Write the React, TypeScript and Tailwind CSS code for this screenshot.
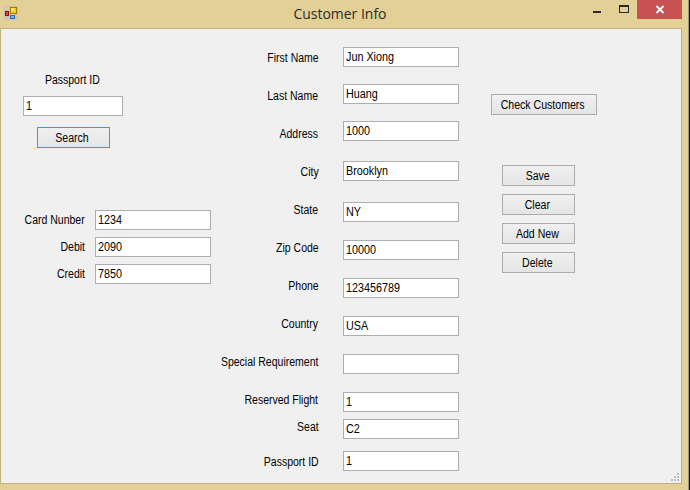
import type { ReactNode } from 'react';

type Entry = { text: string; gap: string };

const labels: Entry[] = [
  { text: 'First Name', gap: 'mt-[22px]' },
  { text: 'Last Name', gap: 'mt-6' },
  { text: 'Address', gap: 'mt-6' },
  { text: 'City', gap: 'mt-6' },
  { text: 'State', gap: 'mt-6' },
  { text: 'Zip Code', gap: 'mt-6' },
  { text: 'Phone', gap: 'mt-6' },
  { text: 'Country', gap: 'mt-6' },
  { text: 'Special Requirement', gap: 'mt-6' },
  { text: 'Reserved Flight', gap: 'mt-6' },
  { text: 'Seat', gap: 'mt-[13px]' },
  { text: 'Passport ID', gap: 'mt-[21px]' },
];

const values: Entry[] = [
  { text: 'Jun Xiong', gap: 'mt-[18px]' },
  { text: 'Huang', gap: 'mt-[17px]' },
  { text: '1000', gap: 'mt-[17px]' },
  { text: 'Brooklyn', gap: 'mt-5' },
  { text: 'NY', gap: 'mt-[21px]' },
  { text: '10000', gap: 'mt-[18px]' },
  { text: '123456789', gap: 'mt-[18px]' },
  { text: 'USA', gap: 'mt-[18px]' },
  { text: '', gap: 'mt-[18px]' },
  { text: '1', gap: 'mt-[18px]' },
  { text: 'C2', gap: 'mt-[7px]' },
  { text: '1', gap: 'mt-3' },
];

function Label({ children, className = '' }: { children: ReactNode; className?: string }) {
  return (
    <div className={`h-[14px] shrink-0 leading-[14px] whitespace-nowrap scale-x-[0.875] ${className}`}>{children}</div>
  );
}

function Field({ value, className }: { value: string; className: string }) {
  return (
    <div className={`flex h-5 shrink-0 items-start border border-[#abadb3] bg-white pl-[1.5px] pt-[2px] ${className}`}>
      <span className="origin-left scale-x-[0.9] leading-[14px] whitespace-nowrap">{value}</span>
    </div>
  );
}

function Button({ children, className = 'w-[73px] border-[#acacac]' }: { children: ReactNode; className?: string }) {
  return (
    <button
      className={`flex h-[21px] shrink-0 items-center justify-center border bg-linear-to-b from-[#f0f0f0] to-[#e5e5e5] pr-[2px] ${className}`}
    >
      <span className="scale-x-[0.88] leading-[14px] whitespace-nowrap">{children}</span>
    </button>
  );
}

function AppIcon() {
  return (
    <svg width="14" height="14" viewBox="0 0 14 14" shapeRendering="crispEdges">
      <path d="M.5 .5h13v13H.5zM5.5 .5v13M.5 4.5h5M.5 10.5h13M3.5 10.5v3M11.5 8v6" fill="none" stroke="#c4c1b6" />
      <rect x="1" y="5" width="4" height="5" fill="#9a1111" />
      <rect x="2" y="6" width="2" height="3" fill="#dc493e" />
      <rect x="6" y="1" width="7" height="7" fill="#a87900" />
      <rect x="7" y="2" width="5" height="5" fill="#f8c824" />
      <rect x="7" y="2" width="3" height="3" fill="#ffe581" />
      <rect x="6" y="9" width="5" height="4" fill="#3465c7" />
      <rect x="7" y="10" width="3" height="2" fill="#78aaf5" />
    </svg>
  );
}

export default function App() {
  return (
    <div className="flex h-[490px] w-[690px] overflow-hidden border-r border-[#17150f] bg-[#e2d096] font-['Liberation_Sans',Arial,sans-serif] text-[12px] text-black">
      <div className="flex w-full flex-col border-r border-[#a59768]">
        <header className="flex h-7 shrink-0 items-start">
          <div className="ml-1 mt-1.5">
            <AppIcon />
          </div>
          <h1 className="ml-[226px] w-[192px] text-center font-['Open_Sans','Noto_Sans',sans-serif] text-[15px] leading-[27px] text-[#2d2b25]">
            <span className="inline-block scale-x-[0.93] whitespace-nowrap">Customer Info</span>
          </h1>
          <div className="ml-auto mr-[6px] flex">
            <svg width="54" height="19" viewBox="0 0 54 19" shapeRendering="crispEdges">
              <path d="M10 11h8v2h-8z" fill="#2a2a2a" />
              <path d="M36 5h10v8H36zM37 7v5h8V7z" fill="#2a2a2a" fillRule="evenodd" />
            </svg>
            <div className="h-[19px] w-[45px] bg-[#c75050]">
              <svg width="45" height="19" viewBox="0 0 45 19">
                <path d="M19.4 6l7.2 7M26.6 6l-7.2 7" stroke="#fff" strokeWidth="1.9" />
              </svg>
            </div>
          </div>
        </header>
        <main className="flex h-[456px] w-[682px] border border-[#c2b17d] bg-[#f0f0f0]">
          <section className="flex w-[210px] shrink-0 flex-col">
            <div className="ml-[22px] mt-11 flex w-[100px] flex-col items-center">
              <Label className="mr-[2px]">Passport ID</Label>
              <Field value="1" className="mt-[9px] w-full" />
              <Button className="mt-[11px] w-[73px] border-[#3399ff]">Search</Button>
            </div>
            <div className="mt-[62px] flex justify-between">
              <div className="flex w-[84px] flex-col items-end gap-[13px] pt-[3px]">
                <Label className="origin-right">Card Nunber</Label>
                <Label className="origin-right">Debit</Label>
                <Label className="origin-right">Credit</Label>
              </div>
              <div className="flex w-[116px] flex-col gap-[7px]">
                <Field value="1234" className="w-full" />
                <Field value="2090" className="w-full" />
                <Field value="7850" className="w-full" />
              </div>
            </div>
          </section>
          <section className="flex w-[248px] shrink-0 justify-between">
            <div className="flex w-[107.5px] flex-col items-end">
              {labels.map((l, i) => (
                <Label key={i} className={`origin-right ${l.gap}`}>
                  {l.text}
                </Label>
              ))}
            </div>
            <div className="flex w-[116px] flex-col">
              {values.map((v, i) => (
                <Field key={i} value={v.text} className={v.gap} />
              ))}
            </div>
          </section>
          <section className="ml-8 flex w-[106px] shrink-0 flex-col pt-[65px]">
            <Button className="w-[106px] border-[#acacac]">Check Customers</Button>
            <div className="ml-[11px] mt-[50px] flex flex-col gap-2">
              <Button>Save</Button>
              <Button>Clear</Button>
              <Button>Add New</Button>
              <Button>Delete</Button>
            </div>
          </section>
          <svg className="mb-[2px] ml-auto mr-[2px] self-end" width="8" height="8" viewBox="0 0 8 8" shapeRendering="crispEdges">
            <path d="M6 0h2v2h-2zM3 3h2v2h-2zM6 3h2v2h-2zM0 6h2v2h-2zM3 6h2v2h-2zM6 6h2v2h-2z" fill="#bfbfbf" />
          </svg>
        </main>
      </div>
    </div>
  );
}
